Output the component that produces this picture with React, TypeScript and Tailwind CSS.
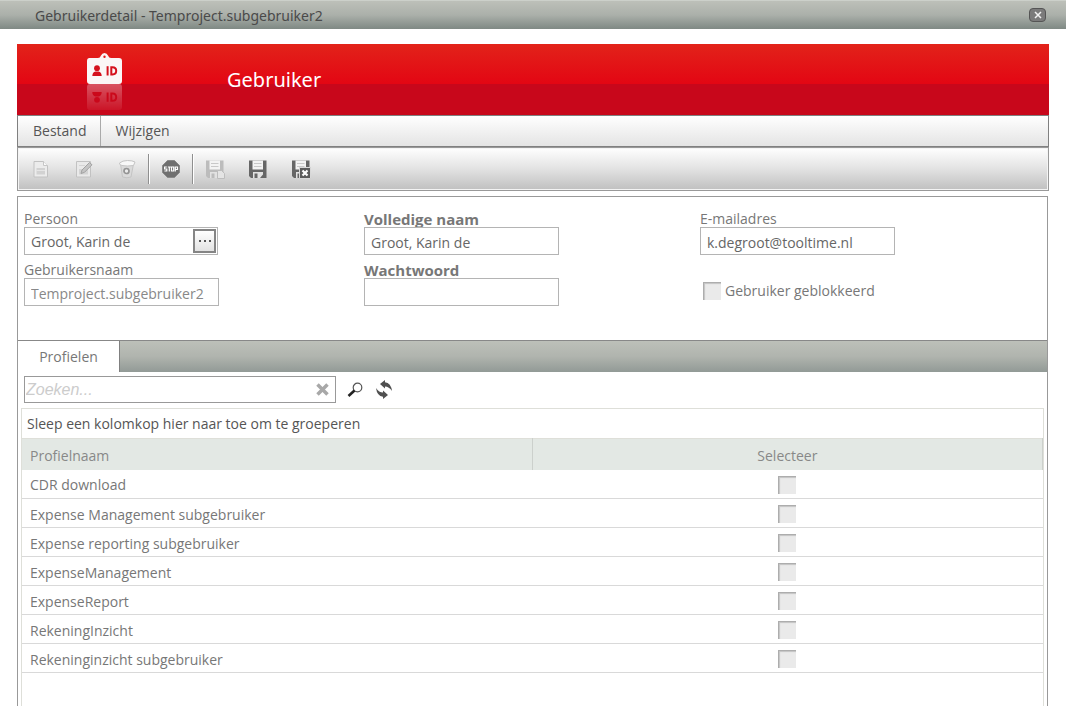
import * as React from 'react';

const profiles = [
  'CDR download',
  'Expense Management subgebruiker',
  'Expense reporting subgebruiker',
  'ExpenseManagement',
  'ExpenseReport',
  'RekeningInzicht',
  'Rekeninginzicht subgebruiker',
];

function BadgeShape() {
  return (
    <>
      <path
        fillRule="evenodd"
        fill="#fbf6f6"
        d="M2.500 6h8.500q2 0 3-2.500 1-2.500 3.500-2.500t3.500 2.500q1 2.500 3 2.500H32q3 0 3 3v20q0 3-3 3H3q-3 0-3-3V9q0-3 2.500-3zm15-2.500a1.200 1.200 0 1 0 0 2.400 1.200 1.200 0 0 0 0-2.400z"
      />
      <g fill="#d5101c">
        <circle cx="10" cy="16.200" r="2.900" />
        <path d="M5.300 24q0-3.700 3.200-4.600h3q3.200 .9 3.200 4.600z" />
      </g>
      <g fill="none" stroke="#d5101c" strokeWidth="2">
        <path d="M20.600 14.200v9.300" />
        <path d="M24.300 15.200h1.200q3.700 0 3.700 3.600t-3.700 3.700h-1.200z" />
      </g>
    </>
  );
}

function BadgeLogo() {
  return (
    <svg width="36" height="58" viewBox="0 0 36 58" aria-hidden="true">
      <defs>
        <linearGradient id="fade" x1="0" y1="1" x2="0" y2="0">
          <stop offset="0" stopColor="#fff" stopOpacity="0.320" />
          <stop offset="1" stopColor="#fff" stopOpacity="0" />
        </linearGradient>
        <mask id="reflect">
          <rect width="36" height="32" fill="url(#fade)" />
        </mask>
      </defs>
      <BadgeShape />
      <g transform="translate(0 64) scale(1 -1)">
        <g mask="url(#reflect)">
          <BadgeShape />
        </g>
      </g>
    </svg>
  );
}

function NewIcon() {
  return (
    <svg width="18" height="20" viewBox="0 0 18 20" aria-hidden="true">
      <path d="M2 2.500h9.500l4 4v11.500H2z" fill="#ececec" stroke="#c2c2c2" />
      <path d="M11.500 2.500v4h4" fill="#fafafa" stroke="#c6c6c6" />
      <path d="M4.500 9h8.500v6.500H4.500z" fill="#d2d2d2" />
      <path d="M4.500 11.500h8.500" stroke="#e6e6e6" />
    </svg>
  );
}

function EditIcon() {
  return (
    <svg width="18" height="20" viewBox="0 0 18 20" aria-hidden="true">
      <path d="M1.500 2.500h14V18h-14z" fill="#e9e9e9" stroke="#c2c2c2" />
      <path d="M4 10h9v5.500H4z" fill="#d4d4d4" />
      <path d="M4 6.500h6" stroke="#d4d4d4" />
      <path d="M6 14.500l1-3.500 7.500-7.500 2.500 2.300-7.500 7.500z" fill="#c4c4c4" stroke="#a2a2a2" />
    </svg>
  );
}

function DeleteIcon() {
  return (
    <svg width="18" height="20" viewBox="0 0 18 20" aria-hidden="true">
      <path d="M2.500 5l2 13q4.500 1.500 8.500 0l2.500-13z" fill="#dadada" stroke="#c4c4c4" />
      <path d="M1.500 4q3-2.500 8-2.500t7.500 1.500L15.500 6.500Q9 7.500 4 6.500q-3-.5-2.500-2.500z" fill="#f8f8f8" stroke="#c4c4c4" />
      <circle cx="8.500" cy="12" r="2.500" fill="#ececec" stroke="#949494" strokeWidth="1.700" />
    </svg>
  );
}

function StopIcon() {
  return (
    <svg width="18" height="18" viewBox="0 0 18 18" aria-hidden="true">
      <path d="M5.500.5h7l5 5v7l-5 5h-7l-5-5v-7z" fill="#707070" stroke="#8a8a8a" />
      <path
        d="M4.800 7H2.600v2h2.200v2H2.400M5.800 7h3M7.300 7v4.500M9.500 7h2.200v4H9.500zM13.300 11.500V7h2.200v2.500h-2.200"
        fill="none"
        stroke="#fff"
        strokeWidth="1.200"
      />
    </svg>
  );
}

function FloppyIcon({ variant }: { variant: 'page' | 'save' | 'close' }) {
  const color = variant === 'page' ? '#bcbcbc' : '#666';
  return (
    <svg width="20" height="20" viewBox="0 0 20 20" aria-hidden="true">
      <path d="M1 1.500h17.500V19H3l-2-2z" fill={color} />
      <path d="M4.500 1.500H15v9H4.500z" fill="#f3f3f3" />
      <path d="M6 4.500h7.500M6 7.500h7.500" stroke="#c8c8c8" />
      <path d="M5 13h10v6H5z" fill="#e2e2e2" />
      <path d="M12 19l3-3.500V19z" fill={color} />
      <path d="M6.500 14.500h3V19h-3z" fill={color} />
      {variant === 'page' && <path d="M12.500 11.500h4l3 3v5h-7z" fill="#e4e4e4" stroke="#bdbdbd" />}
      {variant === 'close' && (
        <>
          <path d="M8.500 8.500h11v11h-11z" fill="#5c5c5c" stroke="#d8d8d8" />
          <path d="M11.500 11.500l5 5M16.500 11.500l-5 5" stroke="#fff" strokeWidth="2.200" />
        </>
      )}
    </svg>
  );
}

function ToolButton({ label, disabled, children }: { label: string; disabled?: boolean; children: React.ReactNode }) {
  return (
    <button type="button" aria-label={label} disabled={disabled} className="flex w-[43px] items-center justify-center">
      {children}
    </button>
  );
}

function ToolSeparator() {
  return <span className="h-[30px] w-px bg-[#8f8f8f] shadow-[1px_0_0_#fff]" />;
}

function Tick({ id, label }: { id?: string; label?: string }) {
  return (
    <input
      id={id}
      type="checkbox"
      aria-label={label}
      className="block size-[18px] shrink-0 appearance-none bg-[#eaeaea] shadow-[inset_1px_1px_0_#adadad,inset_2px_2px_1px_#c4c4c4] checked:bg-[#777]"
    />
  );
}

type FieldProps = {
  id: string;
  label: string;
  value: string;
  type?: string;
  required?: boolean;
  readOnly?: boolean;
};

function Field({ id, label, value, type = 'text', required, readOnly }: FieldProps) {
  return (
    <div className="flex flex-col">
      <label htmlFor={id} className={required ? 'text-[15px] leading-4 font-bold' : 'leading-4'}>
        {label}
      </label>
      <input
        id={id}
        type={type}
        defaultValue={value}
        readOnly={readOnly}
        className="h-7 w-[195px] border border-[#b4b4b4] px-1.5 pt-0.5 text-[#666] read-only:text-[#888]"
      />
    </div>
  );
}

function TitleBar() {
  return (
    <header className="flex h-[29px] items-center justify-between border-t border-[#ccd0ca] bg-linear-to-b from-[#bdc0b9] via-[#abb0aa] to-[#7f8984] pr-5 pl-[35px]">
      <h1 className="pt-0.5 font-['Noto_Sans',sans-serif] text-sm text-[#4a4a4a]">
        Gebruikerdetail - Temproject.subgebruiker2
      </h1>
      <button
        type="button"
        aria-label="Sluiten"
        className="flex h-[14px] w-[17px] items-center justify-center rounded border border-[#555] bg-[#7b7b7b]"
      >
        <svg width="8" height="8" viewBox="0 0 8 8" aria-hidden="true">
          <path d="M1 1l6 6M7 1L1 7" stroke="#f2f2f2" strokeWidth="1.500" />
        </svg>
      </button>
    </header>
  );
}

function Toolbar() {
  return (
    <div className="flex h-11 items-center border border-[#999] bg-linear-to-b from-white via-[#e2e2e2] to-[#c0c0c0] pl-px shadow-[inset_0_0_0_1px_#f4f4f4]">
      <ToolButton label="Nieuw" disabled>
        <NewIcon />
      </ToolButton>
      <ToolButton label="Bewerken" disabled>
        <EditIcon />
      </ToolButton>
      <ToolButton label="Verwijderen" disabled>
        <DeleteIcon />
      </ToolButton>
      <ToolSeparator />
      <ToolButton label="Stoppen">
        <StopIcon />
      </ToolButton>
      <ToolSeparator />
      <ToolButton label="Opslaan en nieuw" disabled>
        <FloppyIcon variant="page" />
      </ToolButton>
      <ToolButton label="Opslaan">
        <FloppyIcon variant="save" />
      </ToolButton>
      <ToolButton label="Opslaan en sluiten">
        <FloppyIcon variant="close" />
      </ToolButton>
    </div>
  );
}

function UserForm() {
  return (
    <form className="grid h-[143px] grid-cols-[340fr_336fr_347fr] content-start gap-y-[7px] pt-[14px] pl-1.5">
      <div className="flex flex-col">
        <label htmlFor="persoon" className="leading-4">
          Persoon
        </label>
        <div className="flex h-7 w-[194px] border border-[#b4b4b4]">
          <input
            id="persoon"
            type="text"
            defaultValue="Groot, Karin de"
            className="min-w-0 flex-1 px-1.5 pt-0.5 text-[#666]"
          />
          <button
            type="button"
            aria-label="Persoon kiezen"
            className="m-px flex w-[23px] items-center justify-center border-2 border-[#858585] bg-linear-to-b from-white to-[#e2e2e2]"
          >
            <svg width="12" height="2" viewBox="0 0 12 2" aria-hidden="true">
              <path d="M0 0h2v2H0zM5 0h2v2H5zM10 0h2v2h-2z" fill="#555" />
            </svg>
          </button>
        </div>
      </div>
      <Field id="naam" label="Volledige naam" value="Groot, Karin de" required />
      <Field id="email" label="E-mailadres" value="k.degroot@tooltime.nl" />
      <Field id="gebruikersnaam" label="Gebruikersnaam" value="Temproject.subgebruiker2" readOnly />
      <Field id="wachtwoord" label="Wachtwoord" value="" type="password" required />
      <div className="flex items-center gap-1 pt-[14px] pl-[3px]">
        <Tick id="geblokkeerd" />
        <label htmlFor="geblokkeerd">Gebruiker geblokkeerd</label>
      </div>
    </form>
  );
}

function SearchBar() {
  return (
    <div className="flex items-center pt-1 pb-[5px] pl-1.5">
      <div className="flex h-[27px] w-[312px] items-center border border-[#999]">
        <input
          type="text"
          aria-label="Zoeken"
          placeholder="Zoeken..."
          className="min-w-0 flex-1 pl-px font-['Liberation_Sans',sans-serif] text-base italic placeholder:text-[#ccc]"
        />
        <button type="button" aria-label="Wissen" className="px-1.5">
          <svg width="13" height="13" viewBox="0 0 13 13" aria-hidden="true">
            <path d="M1.500 1.500l10 10M11.500 1.500l-10 10" stroke="#a8a8a8" strokeWidth="3.500" />
          </svg>
        </button>
      </div>
      <button type="button" aria-label="Zoek" className="ml-[11px]">
        <svg width="16" height="16" viewBox="0 0 16 16" aria-hidden="true">
          <circle cx="10.500" cy="5.500" r="4.300" fill="#fff" stroke="#555" strokeWidth="1.200" />
          <path d="M7.500 8.500L1.500 14" stroke="#222" strokeWidth="2.600" />
        </svg>
      </button>
      <button type="button" aria-label="Vernieuwen" className="ml-3">
        <svg width="18" height="19" viewBox="0 0 18 19" aria-hidden="true">
          <g fill="#505050">
            <path d="M5 4l5-4v2.200q6 .8 7 8.800-3-4.500-7-4.500V8.500z" />
            <path d="M13 15l-5 4v-2.200Q2 16 1 8q3 4.500 7 4.500v-2z" />
          </g>
        </svg>
      </button>
    </div>
  );
}

function ProfileGrid() {
  return (
    <div className="mx-[3px] flex flex-1 flex-col border-x border-t border-[#dedfd9]">
      <p className="h-[29px] pl-[5px] leading-[29px] text-[#555]">Sleep een kolomkop hier naar toe om te groeperen</p>
      <table className="w-full table-fixed border-collapse">
        <thead>
          <tr className="h-[31px] border-t border-[#dedfd9] bg-[#e3e8e4] text-[#888]">
            <th scope="col" className="border-r border-[#ccd0cc] pt-[3px] pl-2 text-left font-normal">
              Profielnaam
            </th>
            <th scope="col" className="border-r border-[#ccd0cc] pt-[3px] text-center font-normal">
              Selecteer
            </th>
          </tr>
        </thead>
        <tbody>
          {profiles.map((name) => (
            <tr key={name} className="h-[29px] border-b border-[#d9d9d9]">
              <td className="pt-[3px] pl-2">{name}</td>
              <td className="pt-0.5">
                <div className="flex justify-center">
                  <Tick label={name} />
                </div>
              </td>
            </tr>
          ))}
        </tbody>
      </table>
    </div>
  );
}

export default function App() {
  return (
    <div className="flex min-h-screen flex-col bg-white font-['Open_Sans',sans-serif] text-sm text-[#777]">
      <TitleBar />
      <main className="flex flex-1 flex-col px-[17px] pt-[15px]">
        <div className="flex h-[71px] items-center bg-[linear-gradient(to_bottom,#e2231a_0%,#e30613_56%,#c8071b_56%,#c8071b_100%)] pl-[70px]">
          <div className="pt-0.5">
            <BadgeLogo />
          </div>
          <h2 className="pl-[104px] font-['Noto_Sans',sans-serif] text-xl text-white">Gebruiker</h2>
        </div>
        <nav className="flex h-8 items-stretch border border-[#808080] bg-linear-to-b from-white to-[#e4e4e4] text-[#555]">
          <button type="button" className="border-r border-[#aaa] pr-[13px] pl-[15px]">
            Bestand
          </button>
          <button type="button" className="pr-[13px] pl-[15px]">
            Wijzigen
          </button>
        </nav>
        <Toolbar />
        <section className="mt-[5px] mr-px flex flex-1 flex-col border-x border-t border-[#999]">
          <UserForm />
          <div role="tablist" className="flex h-8 border-t border-[#888] bg-linear-to-b from-[#bdc0b9] via-[#b0b4ae] to-[#929a96]">
            <button type="button" role="tab" aria-selected="true" className="w-[102px] border-r border-[#808080] bg-white">
              Profielen
            </button>
          </div>
          <SearchBar />
          <ProfileGrid />
        </section>
      </main>
    </div>
  );
}
